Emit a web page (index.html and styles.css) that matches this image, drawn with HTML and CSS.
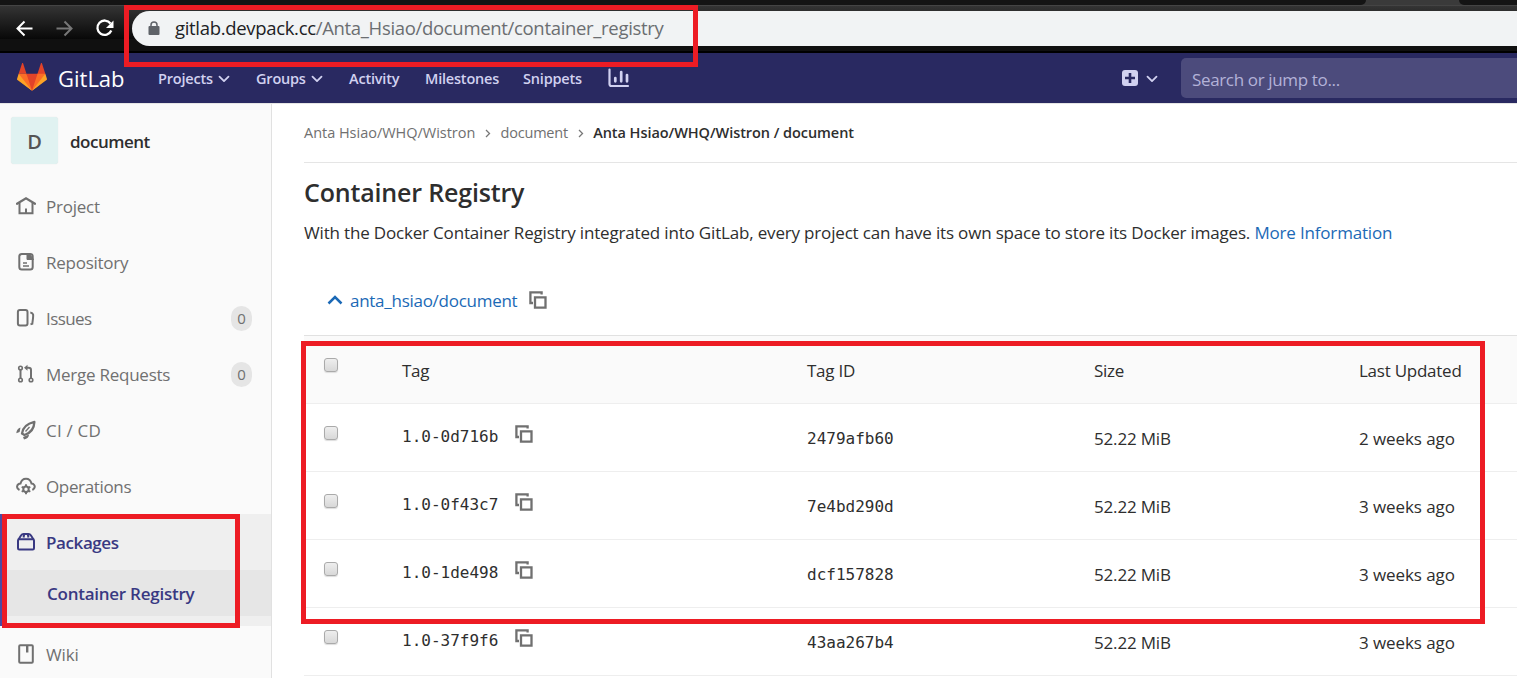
FILE: index.html
```html
<!DOCTYPE html>
<html lang="en">
<head>
<meta charset="utf-8">
<title>Container Registry</title>
<link rel="stylesheet" href="styles.css">
</head>
<body>
<svg class="defs" width="0" height="0">
  <symbol id="copy" viewBox="0 0 18 18"><path d="M12.6 3.400V1.400H1.400V12H4M6 6.400h10.500v10.200H6z" fill="none" stroke="#707070" stroke-width="2.300"/></symbol>
  <symbol id="down" viewBox="0 0 12 8"><path d="M1.500 1.600 6 6.100l4.500-4.500" fill="none" stroke="currentColor" stroke-width="1.800" stroke-linecap="round" stroke-linejoin="round"/></symbol>
</svg>
<div class="page">
  <header class="browser">
    <div class="tabstrip"><i class="tabs-before"></i><i class="tabs-after"></i></div>
    <div class="toolbar">
      <svg class="nav-icons" width="132" height="34" viewBox="0 0 132 34" fill="none" stroke-width="2">
        <path d="M32.500 17.500H18M24.500 10.500 17.500 17.500l7 7" stroke="#fff"/>
        <path d="M56.500 17.500H71M64.500 10.500l7 7-7 7" stroke="#777"/>
        <path d="M110.500 12.500a7.200 7.200 0 1 0 .8 7" stroke="#fff" stroke-width="2.300"/><path d="M113.500 9.500v7.500h-7.500z" fill="#fff"/>
      </svg>
      <div class="omnibox">
        <svg width="12" height="15" viewBox="0 0 12 15"><rect x=".5" y="5" width="11" height="9" rx="1" fill="#5f6368"/><path d="M3 6V4a3 3 0 0 1 6 0v2" fill="none" stroke="#5f6368" stroke-width="1.500"/></svg>
        <span class="url"><b>gitlab.devpack.cc</b>/Anta_Hsiao/document/container_registry</span>
      </div>
    </div>
  </header>

  <nav class="navbar">
    <svg class="logo" width="30" height="30" viewBox="0 0 36 36"><path fill="#e24329" d="M2 14l9.380 9v-9l-4-12.280c-.205-.632-1.176-.632-1.380 0zM34 14l-9.380 9v-9l4-12.280c.205-.632 1.176-.632 1.380 0zM18 34.380 3 14h30z"/><path fill="#fc6d26" d="M18 34.380 11.380 14H2l4 11zM18 34.380 24.620 14H34l-4 11z"/><path fill="#fca326" d="M2 14 .1 20.160c-.18.565 0 1.200.5 1.560L18 34.380zM34 14l1.900 6.160c.18.565 0 1.200-.5 1.560L18 34.380z"/></svg>
    <span class="brand">GitLab</span>
    <span class="nav-link projects">Projects</span><svg class="caret" width="12" height="8"><use href="#down"/></svg>
    <span class="nav-link groups">Groups</span><svg class="caret" width="12" height="8"><use href="#down"/></svg>
    <span class="nav-link activity">Activity</span>
    <span class="nav-link milestones">Milestones</span>
    <span class="nav-link snippets">Snippets</span>
    <svg class="chart" width="22" height="20" viewBox="0 0 22 20" fill="none" stroke="#d1d1f0" stroke-linecap="round"><path d="M1.500 1.500V16a2 2 0 0 0 2 2H20" stroke-width="2.200"/><path d="M7.300 10v3.300M13.200 4v9.300M19 7v6.300" stroke-width="2.700"/></svg>
    <svg class="plus" width="16" height="16" viewBox="0 0 16 16"><rect width="16" height="16" rx="3" fill="#d1d1f0"/><path d="M8 3v10M3 8h10" stroke="#292961" stroke-width="2.600"/></svg>
    <svg class="caret plus-caret" width="12" height="8"><use href="#down"/></svg>
    <div class="search">Search or jump to...</div>
  </nav>

  <div class="body">
    <aside class="sidebar">
      <div class="context"><span class="avatar">D</span><span class="context-name">document</span></div>
      <div class="item"><svg class="icon" viewBox="0 0 20 20"><path d="M1 7.700 10 2.300 19 7.700" stroke-width="2.300" stroke-linecap="round"/><path d="M3.500 7v10.200h13V7M10 12.500v4.500"/></svg><span class="project">Project</span></div>
      <div class="item"><svg class="icon" viewBox="0 0 20 20"><rect x="3.300" y="2" width="13.400" height="15.500" rx="2.500"/><path d="M11 1.500V7.500h6.500L13.500 2z" fill="#707070" stroke-width="1"/><path d="M7 11h4M7 14h6" stroke-width="1.300"/></svg><span class="repository">Repository</span></div>
      <div class="item"><svg class="icon" viewBox="0 0 20 20"><rect x="1.900" y="2" width="9.600" height="15.600" rx="2"/><path d="M14.300 4.500c4 .5 3 3 2 11.300l-1.800.6" stroke-width="2"/></svg><span class="issues">Issues</span><span class="badge">0</span></div>
      <div class="item"><svg class="icon" viewBox="0 0 20 20"><g stroke-width="1.600"><circle cx="4.500" cy="4" r="1.800"/><circle cx="4.500" cy="16" r="1.800"/><circle cx="15" cy="16" r="1.800"/></g><path d="M4.500 6v8M15 14V6q0-2.300-2.500-2.300H10"/><path d="M11.500.8v6L8 3.800z" fill="#707070" stroke="none"/></svg><span class="merge">Merge Requests</span><span class="badge">0</span></div>
      <div class="item"><svg class="icon" viewBox="0 0 20 20"><path d="M6 13.600q1-9 12.400-11.700Q18 12 8.500 15z" stroke-width="2.300" stroke-linejoin="round"/><path d="M9.500 11.500l4-4.500" stroke-width="1.300"/><path d="M.3 13.200Q.8 8.500 4.500 7.500L3.600 12zM7 17l6-2.500q0 4-5 5z" fill="#707070" stroke="none"/></svg><span class="cicd">CI / CD</span></div>
      <div class="item"><svg class="icon" viewBox="0 0 20 20"><path d="M3.500 14Q.5 12.500 1.200 10 1.800 7.800 4.500 7.600C6 1 14 1 15.500 7.600 18.200 7.800 18.900 10 18.700 11q-.3 2-2.300 3"/><circle cx="10" cy="13.200" r="2.700"/><path d="M10 8.300v2.200M10 16v2.300M5.700 10.700l2 1.200M12.300 14.500l2 1.200M5.700 15.700l2-1.200M12.300 11.900l2-1.200" stroke-width="1.900"/></svg><span class="operations">Operations</span></div>
      <div class="active">
        <div class="item"><svg class="icon purple" viewBox="0 0 20 20"><rect x="2" y="7.200" width="16" height="10.300" rx="1.200"/><path d="M2.500 7.500 5 3.500Q6 2 7.500 2h5Q14 2 15 3.500l2.500 4M7.500 5.500l.7-3M12.500 5.500l-.7-3" stroke-width="2"/></svg><span class="packages">Packages</span></div>
        <div class="subitem"><span class="registry">Container Registry</span></div>
      </div>
      <div class="item"><svg class="icon" viewBox="0 0 20 20"><rect x="3.200" y="1.200" width="13.600" height="17.600" rx="1"/><path d="M11.200 2v6.500" stroke-width="2.400"/></svg><span class="wiki">Wiki</span></div>
    </aside>

    <main class="content">
      <div class="breadcrumb">
        <span class="crumb-group">Anta Hsiao/WHQ/Wistron</span>
        <svg class="sep" width="6" height="9" viewBox="0 0 6 9"><path d="m1 1 3.500 3.500L1 8"/></svg>
        <span class="crumb-doc">document</span>
        <svg class="sep" width="6" height="9" viewBox="0 0 6 9"><path d="m1 1 3.500 3.500L1 8"/></svg>
        <span class="crumb-current">Anta Hsiao/WHQ/Wistron / document</span>
      </div>
      <h1>Container Registry</h1>
      <p class="intro">With the Docker Container Registry integrated into GitLab, every project can have its own space to store its Docker images. <a>More Information</a></p>
      <div class="repo">
        <svg width="16" height="10" viewBox="0 0 16 10"><path d="m1.500 8.500 6.500-6.500 6.500 6.500" fill="none" stroke="#1b69b6" stroke-width="2.500"/></svg>
        <a>anta_hsiao/document</a>
        <svg width="18" height="18"><use href="#copy"/></svg>
      </div>
      <div class="table">
        <div class="row head"><i class="check"></i><span>Tag</span><span>Tag ID</span><span>Size</span><span class="updated">Last Updated</span></div>
        <div class="row"><i class="check"></i><span class="tag">1.0-0d716b<svg width="18" height="18"><use href="#copy"/></svg></span><span class="mono">2479afb60</span><span class="size">52.22 MiB</span><span class="when">2 weeks ago</span></div>
        <div class="row"><i class="check"></i><span class="tag">1.0-0f43c7<svg width="18" height="18"><use href="#copy"/></svg></span><span class="mono">7e4bd290d</span><span class="size">52.22 MiB</span><span class="when">3 weeks ago</span></div>
        <div class="row"><i class="check"></i><span class="tag">1.0-1de498<svg width="18" height="18"><use href="#copy"/></svg></span><span class="mono">dcf157828</span><span class="size">52.22 MiB</span><span class="when">3 weeks ago</span></div>
        <div class="row"><i class="check"></i><span class="tag">1.0-37f9f6<svg width="18" height="18"><use href="#copy"/></svg></span><span class="mono">43aa267b4</span><span class="size">52.22 MiB</span><span class="when">3 weeks ago</span></div>
      </div>
    </main>
  </div>
  <div class="mark mark-url"></div>
  <div class="mark mark-menu"></div>
  <div class="mark mark-table"></div>
</div>
</body>
</html>
```
FILE: styles.css
```css
* { box-sizing: border-box; }
body { margin: 0; overflow: hidden; background: #fff; color: #2e2e2e; font: 400 17px/24px "Open Sans", "Noto Sans", sans-serif; letter-spacing: -.175px; }
.defs { position: absolute; }
.page { position: relative; width: 1517px; height: 678px; overflow: hidden; display: flex; flex-direction: column; white-space: nowrap; }
svg { flex: none; }
a { color: #1b69b6; }

.browser { height: 53px; background: #101010; border-bottom: 2px solid #000; }
.tabstrip { height: 5px; background: #3a3a3a; display: flex; justify-content: space-between; }
.tabs-before { width: 1366px; background: #141414; border-radius: 0 0 7px 0; }
.tabs-after { width: 58px; background: #141414; border-radius: 0 0 0 7px; }
.toolbar { height: 34px; display: flex; background: linear-gradient(#343434, #080808); border-top: 1px solid #444; }
.nav-icons { margin-top: 5px; }
.omnibox { flex: 1; height: 35px; margin-top: 5px; border-radius: 18px 0 0 18px; background: #f1f3f4; display: flex; align-items: center; gap: 15px; padding-left: 16px; }
.url { color: #6b6e71; font-size: 18.5px; letter-spacing: -.32px; padding-bottom: 2px; }
.url b { color: #202124; font-weight: inherit; }

.navbar { height: 50px; background: #292961; color: #d1d1f0; display: flex; align-items: center; padding-left: 17px; }
.logo { margin-top: -2px; }
.brand { width: 99px; padding-left: 11px; margin-right: 12px; color: #fff; font-size: 22px; letter-spacing: 0; font-weight: 400; }
.nav-link { font-weight: 600; font-size: 14.5px; letter-spacing: -.2px; padding-top: 2px; }
.projects, .groups { margin-right: 5px; }
.projects { width: 55px; }
.groups { width: 50px; margin-left: 26px; }
.activity { width: 76px; margin-left: 26px; }
.milestones { width: 98px; }
.snippets { width: 85px; }
.plus { margin-left: 492px; margin-top: -1px; }
.plus-caret { margin-left: 8px; margin-right: 23px; }
.caret { margin-top: 1px; }
.search { flex: 1; height: 40px; border-radius: 5px 0 0 5px; background: #4c4b7c; color: #b3b2d8; padding: 10px 11px; letter-spacing: -.35px; }

.body { flex: 1; display: flex; border-top: 1px solid #e5e5e5; min-height: 0; }
.sidebar { width: 272px; background: #fafafa; border-right: 1px solid #e1e1e1; color: #707070; letter-spacing: -.25px; }
.context { display: flex; align-items: center; gap: 12px; height: 74px; padding: 0 0 2px 11px; color: #2e2e2e; font-weight: 600; }
.context-name { letter-spacing: -.5px; padding-top: 3px; }
.avatar { width: 47px; height: 47px; background: #e0f2f1; border-radius: 3px; display: grid; place-items: center; color: #555; font-size: 20px; padding-top: 3px; box-shadow: 0 0 1px #ddd; }
.item { height: 56px; display: flex; align-items: center; gap: 10px; padding: 0 19px 0 16px; }
.item > span:not(.badge) { padding-top: 2px; }
.icon { width: 20px; height: 20px; fill: none; stroke: #707070; stroke-width: 2; }
.purple { stroke: #393982; }
.issues { letter-spacing: -.6px; }
.operations { letter-spacing: -.35px; }
.cicd { letter-spacing: .2px; }
.wiki { letter-spacing: -.1px; }
.badge { margin-left: auto; width: 21px; height: 25px; border-radius: 11px; background: #e5e5e5; display: grid; place-items: center; font-size: 15px; letter-spacing: 0; }
.active { height: 112px; background: #efefef; color: #393982; font-weight: 600; border-left: 5px solid #4b4ba3; }
.active .item { padding-left: 11px; }
.packages { letter-spacing: -.4px; }
.subitem { height: 46px; background: #e6e6e6; padding: 12px 0 0 42px; letter-spacing: -.25px; }

.content { flex: 1; padding-left: 32px; }
.breadcrumb { display: flex; align-items: center; height: 59px; border-bottom: 1px solid #e5e5e5; color: #707070; font-size: 14.5px; letter-spacing: -.02px; }
.crumb-doc { letter-spacing: -.2px; }
.sep { fill: none; stroke: #777; stroke-width: 1.3; margin: 0 9.6px; }
.crumb-current { font-weight: 600; color: #2e2e2e; letter-spacing: -.06px; }
h1 { margin: 12px 0 0; font-size: 25px; font-weight: 600; line-height: 34px; letter-spacing: -.17px; }
.intro { margin: 12px 0 0; }
.repo { display: flex; align-items: center; gap: 7px; padding-left: 23px; height: 70px; margin-top: 20px; }
.repo a { margin-right: 5px; padding-top: 2px; letter-spacing: -.27px; }
.table { border-top: 1px solid #e1e1e1; }
.row { display: grid; grid-template-columns: 98px 405px 287px 265px 1fr; height: 68px; align-items: center; border-bottom: 1px solid #eee; }
.row > span { padding-top: 3px; }
.head { background: #fafafa; letter-spacing: -.25px; }
.check { width: 14px; height: 14px; margin: -10px 0 0 20px; border: 1px solid #aaa; border-radius: 3px; background: linear-gradient(#eee, #d8d8d8); box-shadow: 0 1px 1px #ddd; }
.when { letter-spacing: -.08px; }
.tag, .mono { font: 16px/24px "DejaVu Sans Mono", monospace; letter-spacing: 0; }
.row > .tag { display: flex; align-items: center; gap: 17px; padding: 0; margin-top: -2px; }
.tag svg { margin-top: -5px; }

.mark { position: absolute; border: 5px solid #ed1c24; }
.mark-url { left: 124px; top: 5px; width: 574px; height: 62px; }
.mark-menu { left: 2px; top: 514px; width: 238px; height: 114px; }
.mark-table { left: 301px; top: 341px; width: 1184px; height: 283px; }
```
